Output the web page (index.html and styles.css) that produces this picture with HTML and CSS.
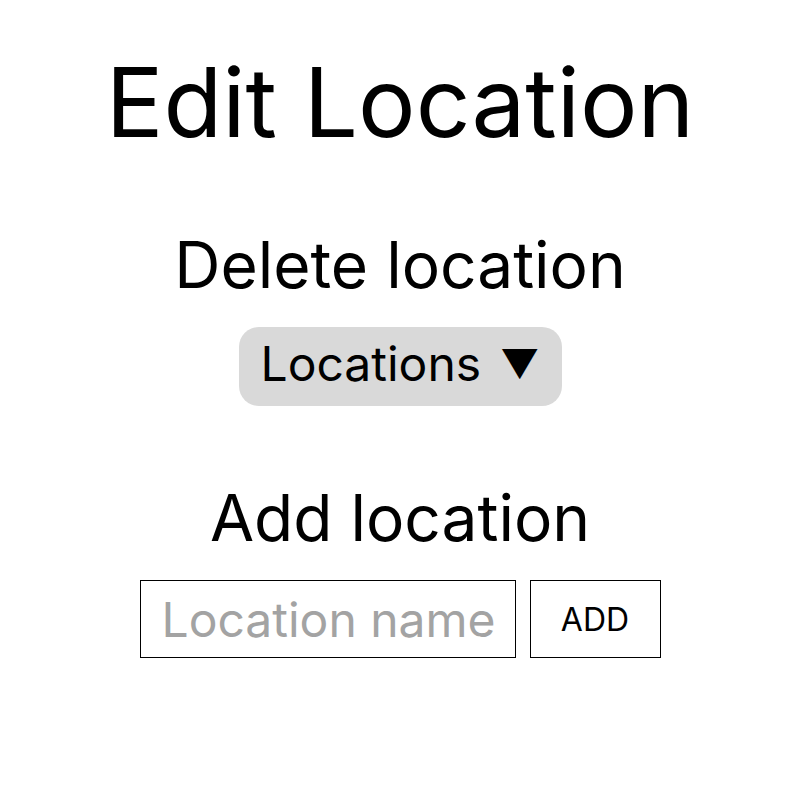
FILE: index.html
```html
<!DOCTYPE html>
<html lang="en">
<head>
    <meta charset="UTF-8">
    <title>Edit Location</title>
    <link rel="stylesheet" href="styles.css">
</head>
<body>
<div class="page">
    <h1 class="title">Edit Location</h1>

    <h2 class="section">Delete location</h2>
    <button class="dropdown">Locations<span class="arrow">&#9660;</span></button>

    <h2 class="section addTitle">Add location</h2>
    <form class="addForm" onsubmit="return false;">
        <input type="text" class="nameInput" placeholder="Location name">
        <button type="submit" class="btnAdd">ADD</button>
    </form>
</div>
</body>
</html>
```

FILE: styles.css
```css
body{
    margin: 0;
    font-family: Inter, "Noto Sans", sans-serif;
    color: black;
    background: white;
}
.page{
    display: flex;
    flex-direction: column;
    align-items: center;
    padding-top: 44px;
}
.title{
    font-size: 96px;
    font-weight: 400;
    margin: 0;
    line-height: 116px;
}
.section{
    font-size: 64px;
    font-weight: 400;
    margin: 0;
    line-height: 78px;
}
h2.section{
    margin-top: 66px;
}
.dropdown{
    margin-top: 23px;
    font-family: inherit;
    font-size: 48px;
    background-color: #d9d9d9;
    border: none;
    border-radius: 20px;
    padding: 0 22px 6px 22px;
    height: 79px;
    color: black;
    display: flex;
    align-items: center;
}
.arrow{
    font-size: 39px;
    margin-left: 19px;
}
h2.addTitle{
    margin-top: 73px;
}
.addForm{
    display: flex;
    gap: 14px;
    margin-top: 23px;
}
.nameInput{
    font-family: inherit;
    font-size: 48px;
    width: 376px;
    height: 78px;
    box-sizing: border-box;
    border: 1px solid black;
    padding: 0 21px;
    outline: none;
}
.nameInput::placeholder{
    color: #a3a3a3;
}
.btnAdd{
    font-family: inherit;
    font-size: 32px;
    width: 131px;
    height: 78px;
    background: white;
    border: 1px solid black;
    color: black;
}
```
